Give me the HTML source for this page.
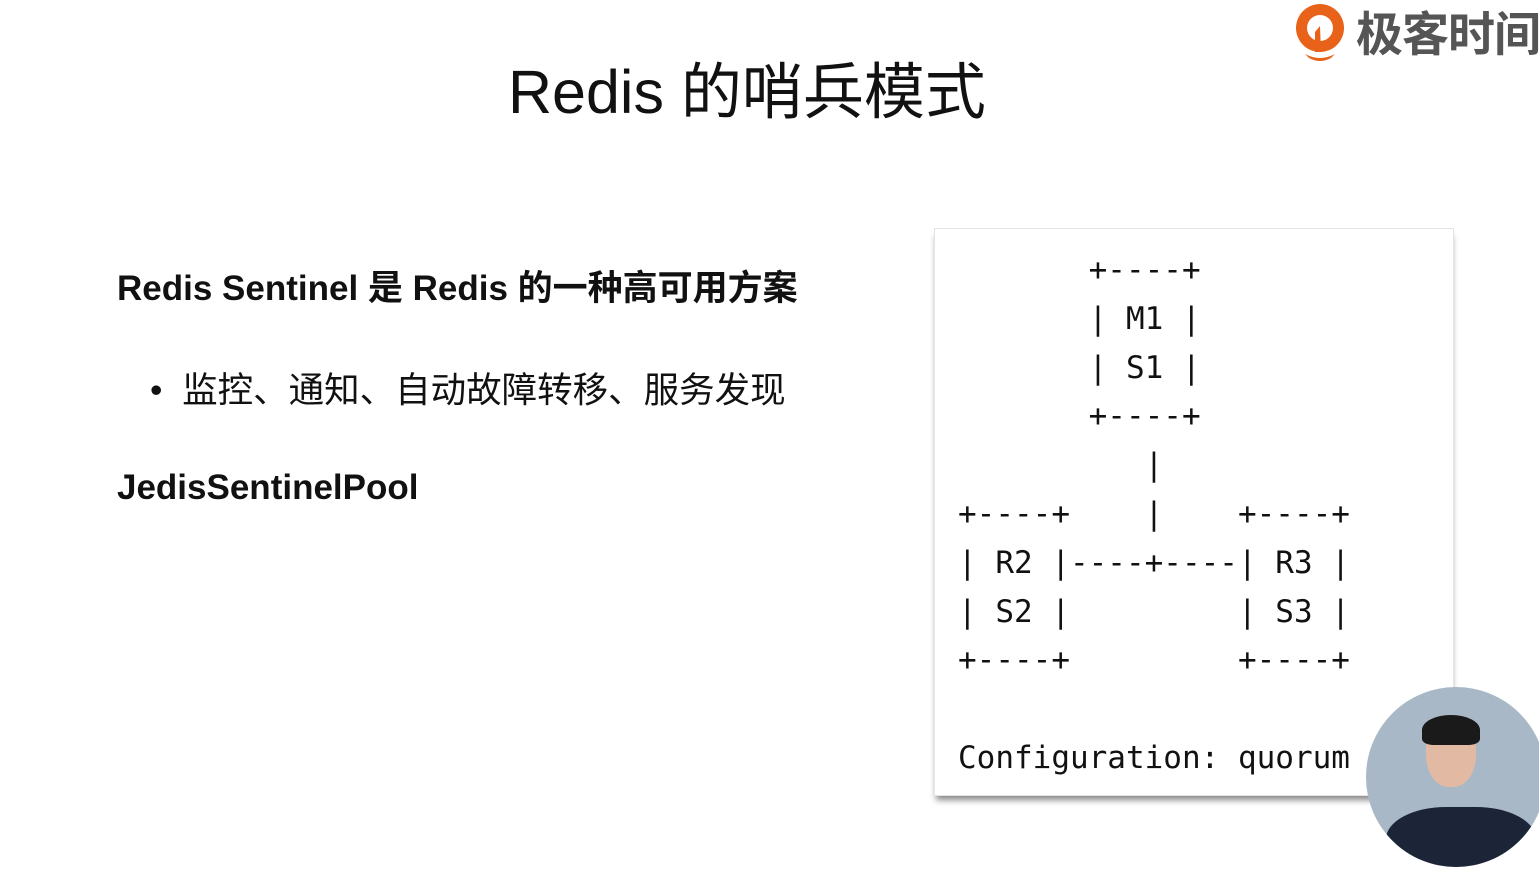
<!DOCTYPE html>
<html><head><meta charset="utf-8"><style>
body{margin:0;width:1539px;height:881px;background:#fff;position:relative;overflow:hidden;font-family:"Liberation Sans","Noto Sans CJK SC",sans-serif;color:#111}
.t{position:absolute;white-space:nowrap}
.box{position:absolute;left:934px;top:228px;width:518px;height:566px;background:#fff;border:1px solid #e4e4e4;box-shadow:0 6px 6px -2px #888}
pre{position:absolute;left:958px;top:246px;margin:0;font-family:"DejaVu Sans Mono","Liberation Mono",monospace;font-size:31px;line-height:48.8px;color:#111}
</style></head><body>
<div class="t" style="left:508px;top:42px;font-size:61px;">Redis 的哨兵模式</div>
<div class="t" style="left:117px;top:260px;font-size:35px;font-weight:bold;">Redis Sentinel 是 Redis 的一种高可用方案</div>
<div class="t" style="left:150px;top:362px;font-size:35.5px;">•&nbsp;&nbsp;监控、通知、自动故障转移、服务发现</div>
<div class="t" style="left:117px;top:468px;font-size:35px;font-weight:bold;">JedisSentinelPool</div>
<div class="box"></div>
<pre>       +----+
       | M1 |
       | S1 |
       +----+
          |
+----+    |    +----+
| R2 |----+----| R3 |
| S2 |         | S3 |
+----+         +----+

Configuration: quorum</pre>
<div style="position:absolute;left:1366px;top:687px;width:180px;height:180px;border-radius:50%;background:#a9b8c6;overflow:hidden">
<div style="position:absolute;left:20px;top:120px;width:150px;height:80px;border-radius:40% 40% 0 0;background:#1c2538"></div>
<div style="position:absolute;left:60px;top:30px;width:50px;height:70px;border-radius:45%;background:#e2b9a3"></div>
<div style="position:absolute;left:56px;top:28px;width:58px;height:30px;border-radius:50% 50% 20% 20%;background:#1a1a1a"></div>
</div>
<svg style="position:absolute;left:1293px;top:2px" width="54" height="62" viewBox="0 0 54 62"><circle cx="27" cy="26" r="24" fill="#e8621a"/><circle cx="27" cy="26" r="13" fill="#fff"/><path d="M22 30 L27 24 L28 50 L22 50Z" fill="#e8621a"/><path d="M12 52 Q27 60 42 52 L38 56 Q27 62 16 56Z" fill="#e8621a"/></svg>
<div class="t" style="left:1356px;top:-4px;font-size:47px;color:#555;font-weight:bold;letter-spacing:-1px">极客时间</div>
</body></html>
